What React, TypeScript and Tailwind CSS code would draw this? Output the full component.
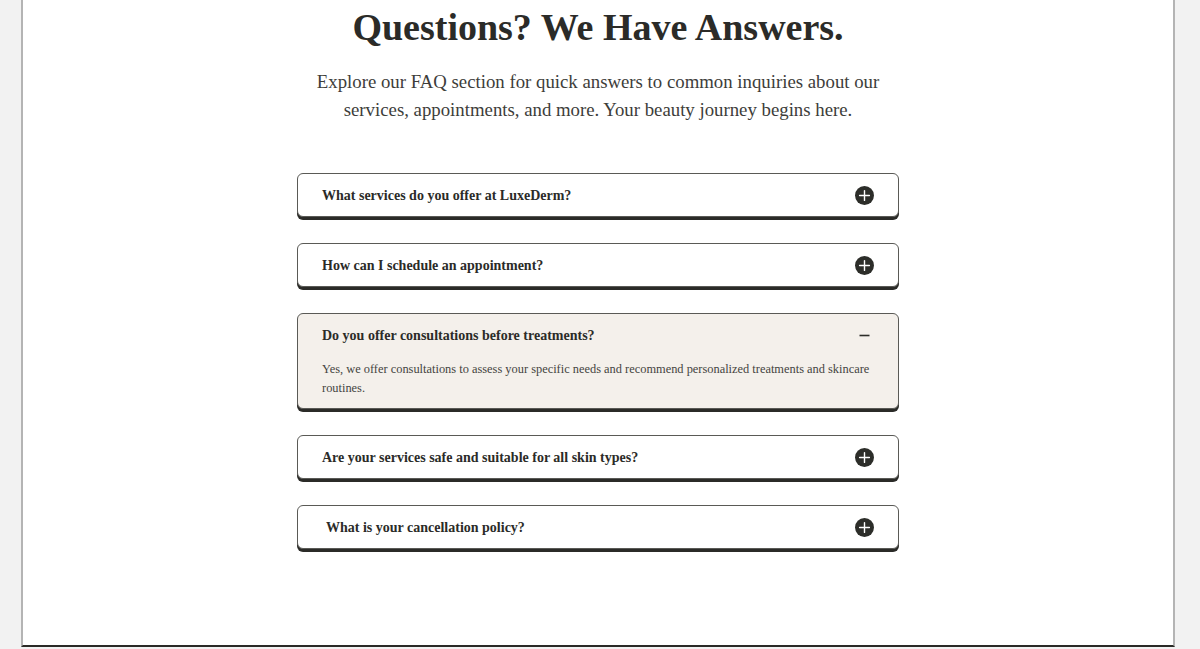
import React from "react";

const faqs = [
  { q: "What services do you offer at LuxeDerm?", open: false },
  { q: "How can I schedule an appointment?", open: false },
  {
    q: "Do you offer consultations before treatments?",
    open: true,
    a: "Yes, we offer consultations to assess your specific needs and recommend personalized treatments and skincare routines.",
  },
  { q: "Are your services safe and suitable for all skin types?", open: false },
  { q: "What is your cancellation policy?", open: false, shift: true },
];

function PlusIcon() {
  return (
    <svg width="19" height="19" viewBox="0 0 19 19" className="shrink-0">
      <circle cx="9.5" cy="9.5" r="9.5" fill="#2c2d29" />
      <path d="M9.5 4.6v9.8M4.6 9.5h9.8" stroke="#fff" strokeWidth="1.4" strokeLinecap="round" />
    </svg>
  );
}

function MinusIcon() {
  return (
    <svg width="19" height="19" viewBox="0 0 19 19" className="shrink-0">
      <path d="M4.5 9.5h10" stroke="#2c2d29" strokeWidth="1.6" />
    </svg>
  );
}

export default function App() {
  return (
    <div
      className="w-[1200px] h-[649px] bg-[#f2f2f2] overflow-hidden"
      style={{ fontFamily: '"Liberation Serif", "Times New Roman", serif' }}
    >
      <div className="ml-[21px] w-[1154px] h-[647px] bg-white border-x-2 border-x-[#b4b4b4] border-b-2 border-b-[#2a2a26] flex flex-col items-center">
        <h1 className="mt-[6px] text-[38px] leading-[43px] font-bold text-[#2b2b28]">
          Questions? We Have Answers.
        </h1>
        <p className="mt-[19px] w-[600px] text-center text-[18.8px] leading-[28px] text-[#3d3d3a]">
          Explore our FAQ section for quick answers to common inquiries about our services, appointments, and more. Your beauty journey begins here.
        </p>
        <div className="mt-[49px] w-[602px] flex flex-col gap-[26px]">
          {faqs.map((f, i) => (
            <div
              key={i}
              className={`rounded-[6px] border border-[#5a5a56] shadow-[0_3px_0_#2b2b28] ${
                f.open ? "bg-[#f4f0eb]" : "bg-white"
              }`}
            >
              <div
                className={`h-[42px] flex items-center justify-between pr-[24px] ${
                  f.shift ? "pl-[28px]" : "pl-[24px]"
                }`}
              >
                <span className="text-[14px] font-bold text-[#2b2b28]">{f.q}</span>
                {f.open ? <MinusIcon /> : <PlusIcon />}
              </div>
              {f.open && (
                <p className="pl-[24px] pr-[24px] pb-[10px] mt-[4px] text-[12.4px] leading-[19px] text-[#444441]">
                  {f.a}
                </p>
              )}
            </div>
          ))}
        </div>
      </div>
    </div>
  );
}
